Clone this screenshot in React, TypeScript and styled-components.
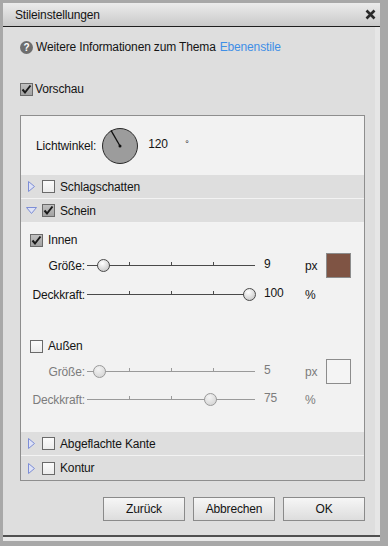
import React from 'react';
import styled, { createGlobalStyle, css } from 'styled-components';

const Global = createGlobalStyle`
  html, body { margin: 0; padding: 0; background: #a8a8a8; }
  body { font-family: "Liberation Sans", Arial, sans-serif; font-size: 12px; letter-spacing: -0.15px; color: #141414; }
  #root { width: 388px; height: 546px; }
`;

const Frame = styled.div`
  width: 388px;
  height: 546px;
  box-sizing: border-box;
  background: #a8a8a8;
  padding: 3px 8px 9px 3px;
  display: flex;
`;

const Window = styled.div`
  flex: 1;
  display: flex;
  flex-direction: column;
  background: #dedede;
  border-bottom: 2px solid #505050;
  box-shadow: 0 4px 0 #e8e8e8;
`;

const TitleBar = styled.div`
  height: 23px;
  display: flex;
  align-items: center;
  justify-content: space-between;
  padding: 0 4px 0 12px;
  background: linear-gradient(#ececec, #c9c9c9);
  border-bottom: 1px solid #1e1e1e;
`;

const Body = styled.div`
  flex: 1;
  display: flex;
  flex-direction: column;
  padding: 10px 0 0 17px;
  border-right: 5px solid #e6e6e6;
`;

const Row = styled.div<{ $h?: number; $mt?: number }>`
  height: ${(p) => p.$h ?? 20}px;
  margin-top: ${(p) => p.$mt ?? 0}px;
  display: flex;
  align-items: center;
  gap: 2px;
`;

const Link = styled.span`
  color: #3f8fe6;
  margin-left: 4px;
`;

const HelpIcon = styled.span`
  width: 13px;
  height: 13px;
  border-radius: 50%;
  background: #6e6e6e;
  color: #fff;
  font-weight: bold;
  font-size: 10px;
  line-height: 13px;
  text-align: center;
  margin-right: 1px;
`;

const Box = styled.span<{ $checked?: boolean }>`
  width: 13px;
  height: 13px;
  box-sizing: border-box;
  border: 1px solid #6a6a6a;
  background: ${(p) => (p.$checked ? 'linear-gradient(#c0c0c0, #a2a2a2)' : 'linear-gradient(#fbfbfb, #ececec)')};
  display: inline-flex;
  align-items: center;
  justify-content: center;
  flex: none;
`;

const Check = ({ checked }: { checked?: boolean }) => (
  <Box $checked={checked}>
    {checked && (
      <svg width="11" height="11" viewBox="0 0 11 11">
        <path d="M1.5 5.5 L4 8.5 L9.5 1.5" fill="none" stroke="#1a1a1a" strokeWidth="2" />
      </svg>
    )}
  </Box>
);

const Panel = styled.div`
  margin-top: 16px;
  width: 345px;
  height: 366px;
  box-sizing: border-box;
  border: 1px solid #8e8e8e;
  background: #f2f2f2;
  display: flex;
  flex-direction: column;
`;

const AngleSection = styled.div`
  height: 59px;
  display: flex;
  align-items: center;
  padding-left: 15px;
`;

const AngleLabel = styled.span`
  margin-right: 5px;
`;

const AngleValue = styled.span`
  margin-left: 9px;
  width: 37px;
  position: relative;
  top: -2px;
`;

const Degree = styled.span`
  font-size: 9px;
  position: relative;
  top: -2px;
`;

const SectionRow = styled.div<{ $last?: boolean }>`
  height: 24px;
  box-sizing: border-box;
  background: #dedede;
  display: flex;
  align-items: center;
  padding-left: 5px;
  gap: 5px;
  ${(p) => !p.$last && css`border-bottom: 1px solid #f3f3f3;`}
`;

const Arrow = styled.span`
  width: 11px;
  height: 11px;
  display: inline-flex;
  align-items: center;
  justify-content: center;
`;

const Content = styled.div`
  flex: 1;
  display: flex;
  flex-direction: column;
  padding-left: 9px;
`;

const Grid = styled.div<{ $disabled?: boolean; $mt?: number }>`
  display: grid;
  grid-template-columns: 57px 168px 50px 21px 25px;
  align-items: center;
  color: ${(p) => (p.$disabled ? '#7c7c7c' : '#141414')};
  margin-top: ${(p) => p.$mt ?? 4}px;
`;

const SliderLabel = styled.span`
  text-align: right;
  padding-right: 2px;
`;

const Track = styled.div<{ $disabled?: boolean }>`
  position: relative;
  height: 14px;
  &::before {
    content: '';
    position: absolute;
    left: 0;
    right: 0;
    top: 6px;
    height: 1px;
    background: ${(p) => (p.$disabled ? '#9a9a9a' : '#4a4a4a')};
  }
`;

const Tick = styled.span<{ $disabled?: boolean }>`
  position: absolute;
  top: 3px;
  width: 1px;
  height: 3px;
  background: ${(p) => (p.$disabled ? '#9a9a9a' : '#4a4a4a')};
`;

const Thumb = styled.span<{ $disabled?: boolean }>`
  position: absolute;
  top: 0;
  width: 13px;
  height: 13px;
  margin-left: -6px;
  box-sizing: border-box;
  border-radius: 50%;
  border: 1px solid ${(p) => (p.$disabled ? '#9a9a9a' : '#4a4a4a')};
  background: ${(p) =>
    p.$disabled
      ? 'radial-gradient(circle at 40% 30%, #f4f4f4, #cfcfcf)'
      : 'radial-gradient(circle at 40% 30%, #ffffff, #bdbdbd)'};
`;

const Value = styled.span`
  padding-left: 9px;
  position: relative;
  top: -2px;
`;

const Unit = styled.span``;

const Swatch = styled.span<{ $color?: string }>`
  width: 25px;
  height: 25px;
  box-sizing: border-box;
  border: 1px solid #8c8c8c;
  background: ${(p) => p.$color ?? '#f4f4f4'};
`;

const Buttons = styled.div`
  margin-top: 16px;
  width: 345px;
  display: flex;
  justify-content: flex-end;
  gap: 8px;
`;

const Button = styled.button`
  width: 82px;
  height: 24px;
  box-sizing: border-box;
  border: 1px solid #8a8a8a;
  background: linear-gradient(#f6f6f6, #dddddd);
  font-family: "Liberation Sans", Arial, sans-serif;
  font-size: 12px;
  letter-spacing: -0.15px;
  color: #141414;
  padding: 0;
`;

function Slider({ pos, disabled }: { pos: number; disabled?: boolean }) {
  return (
    <Track $disabled={disabled}>
      {[42, 84, 126].map((x) => (
        <Tick key={x} $disabled={disabled} style={{ left: x }} />
      ))}
      <Thumb $disabled={disabled} style={{ left: 6 + pos * 156 }} />
    </Track>
  );
}

const Dial = ({ angle }: { angle: number }) => {
  const r = (angle * Math.PI) / 180;
  const x2 = 19 + Math.cos(r) * 18;
  const y2 = 19 - Math.sin(r) * 18;
  return (
    <svg width="38" height="38" viewBox="0 0 38 38">
      <circle cx="19" cy="19" r="17.5" fill="#9c9c9c" stroke="#2a2a2a" strokeWidth="1" />
      <line x1="19" y1="19" x2={x2} y2={y2} stroke="#111" strokeWidth="1.3" />
      <circle cx="19" cy="19" r="1.5" fill="#111" />
    </svg>
  );
};

const RightArrow = () => (
  <Arrow>
    <svg width="7" height="11" viewBox="0 0 7 11">
      <path d="M0.5 0.5 L6.5 5.5 L0.5 10.5 Z" fill="#dfe3f6" stroke="#7d8ed6" strokeWidth="1" />
    </svg>
  </Arrow>
);

const DownArrow = () => (
  <Arrow>
    <svg width="11" height="7" viewBox="0 0 11 7">
      <path d="M0.5 0.5 L10.5 0.5 L5.5 6.5 Z" fill="#dfe3f6" stroke="#7d8ed6" strokeWidth="1" />
    </svg>
  </Arrow>
);

const CloseX = () => (
  <svg width="11" height="11" viewBox="0 0 11 11">
    <path d="M1.5 1.5 L9.5 9.5 M9.5 1.5 L1.5 9.5" stroke="#2a2a2a" strokeWidth="2.6" />
  </svg>
);

export default function App() {
  return (
    <>
      <Global />
      <Frame>
        <Window>
          <TitleBar>
            <span>Stileinstellungen</span>
            <CloseX />
          </TitleBar>
          <Body>
            <Row $h={20}>
              <HelpIcon>?</HelpIcon>
              <span>
                Weitere Informationen zum Thema<Link>Ebenenstile</Link>
              </span>
            </Row>
            <Row $h={20} $mt={22}>
              <Check checked />
              <span>Vorschau</span>
            </Row>
            <Panel>
              <AngleSection>
                <AngleLabel>Lichtwinkel:</AngleLabel>
                <Dial angle={120} />
                <AngleValue>120</AngleValue>
                <Degree>°</Degree>
              </AngleSection>
              <SectionRow>
                <RightArrow />
                <Check />
                <span>Schlagschatten</span>
              </SectionRow>
              <SectionRow>
                <DownArrow />
                <Check checked />
                <span>Schein</span>
              </SectionRow>
              <Content>
                <Row $h={18} $mt={8}>
                  <Check checked />
                  <span style={{ marginLeft: 3 }}>Innen</span>
                </Row>
                <Grid>
                  <SliderLabel>Größe:</SliderLabel>
                  <Slider pos={9 / 140} />
                  <Value>9</Value>
                  <Unit>px</Unit>
                  <Swatch $color="#7f5444" />
                </Grid>
                <Grid $mt={10}>
                  <SliderLabel>Deckkraft:</SliderLabel>
                  <Slider pos={1} />
                  <Value>100</Value>
                  <Unit>%</Unit>
                  <span />
                </Grid>
                <Row $h={18} $mt={35}>
                  <Check />
                  <span style={{ marginLeft: 3 }}>Außen</span>
                </Row>
                <Grid $disabled>
                  <SliderLabel>Größe:</SliderLabel>
                  <Slider pos={5 / 140} disabled />
                  <Value>5</Value>
                  <Unit>px</Unit>
                  <Swatch />
                </Grid>
                <Grid $disabled $mt={9}>
                  <SliderLabel>Deckkraft:</SliderLabel>
                  <Slider pos={0.75} disabled />
                  <Value>75</Value>
                  <Unit>%</Unit>
                  <span />
                </Grid>
              </Content>
              <SectionRow>
                <RightArrow />
                <Check />
                <span>Abgeflachte Kante</span>
              </SectionRow>
              <SectionRow $last>
                <RightArrow />
                <Check />
                <span>Kontur</span>
              </SectionRow>
            </Panel>
            <Buttons>
              <Button>Zurück</Button>
              <Button>Abbrechen</Button>
              <Button>OK</Button>
            </Buttons>
          </Body>
        </Window>
      </Frame>
    </>
  );
}
